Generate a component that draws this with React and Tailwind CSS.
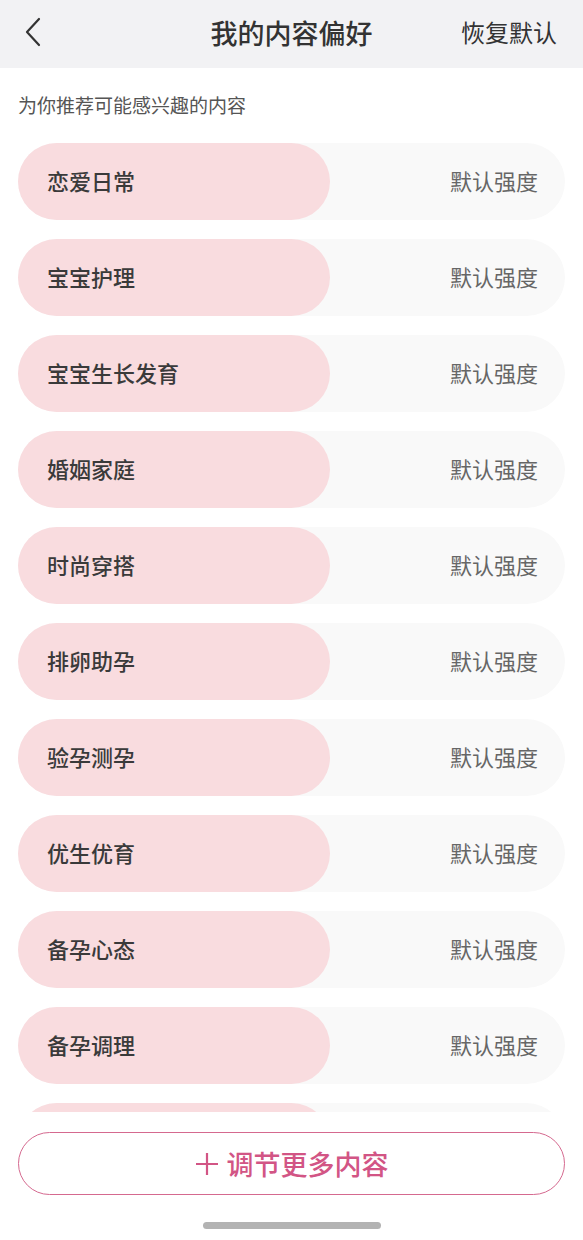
import React from 'react'

const topics = [
  '恋爱日常',
  '宝宝护理',
  '宝宝生长发育',
  '婚姻家庭',
  '时尚穿搭',
  '排卵助孕',
  '验孕测孕',
  '优生优育',
  '备孕心态',
  '备孕调理',
  '',
]

const font = { fontFamily: '"Noto Sans CJK SC", "Noto Sans", sans-serif' }

const App = () => {
  return (
    <div className="w-[583px] h-[1240px] bg-white flex flex-col overflow-hidden" style={font}>
      {/* header */}
      <div className="h-[68px] shrink-0 bg-[#f2f2f4] grid grid-cols-[1fr_auto_1fr] items-center pb-[4px]">
        <div className="pl-[24px] flex items-center">
          <svg width="18" height="30" viewBox="0 0 18 30" fill="none">
            <path d="M15 2 L3 15 L15 28" stroke="#333" strokeWidth="2.2" strokeLinecap="round" strokeLinejoin="round" />
          </svg>
        </div>
        <div className="text-[27px] font-medium text-[#333] leading-none">我的内容偏好</div>
        <div className="flex justify-end pr-[26px] text-[24px] text-[#333] leading-none">恢复默认</div>
      </div>

      <div className="pt-[24px] pl-[18px] text-[19px] leading-[26px] text-[#555]">为你推荐可能感兴趣的内容</div>

      {/* topic list */}
      <div className="h-[994px] shrink-0 overflow-hidden pt-[25px] px-[18px] flex flex-col gap-[19px]">
        {topics.map((t, i) => (
          <div key={i} className="h-[77px] shrink-0 rounded-full bg-[#f9f9f9] flex items-center justify-between">
            <div className="h-full w-[312px] rounded-full bg-[#f9dcdf] flex items-center pl-[29px] pb-[2px] text-[22px] font-medium text-[#3a3a3a]">
              {t}
            </div>
            {t && <div className="pr-[27px] pb-[2px] text-[22px] text-[#666]">默认强度</div>}
          </div>
        ))}
      </div>

      {/* more button */}
      <div className="mt-[20px] mx-[18px] h-[63px] shrink-0 rounded-full border-[1.5px] border-[#d5698f] flex items-center justify-center gap-[8px] text-[#d25585]">
        <svg width="24" height="24" viewBox="0 0 24 24" fill="none">
          <path d="M12 1 V23 M1 12 H23" stroke="#d25585" strokeWidth="2.2" />
        </svg>
        <span className="text-[27px] font-medium leading-none">调节更多内容</span>
      </div>

      <div className="mt-[27px] mx-auto w-[178px] h-[7px] rounded-full bg-[#b3b3b3]" />
    </div>
  )
}

export default App
